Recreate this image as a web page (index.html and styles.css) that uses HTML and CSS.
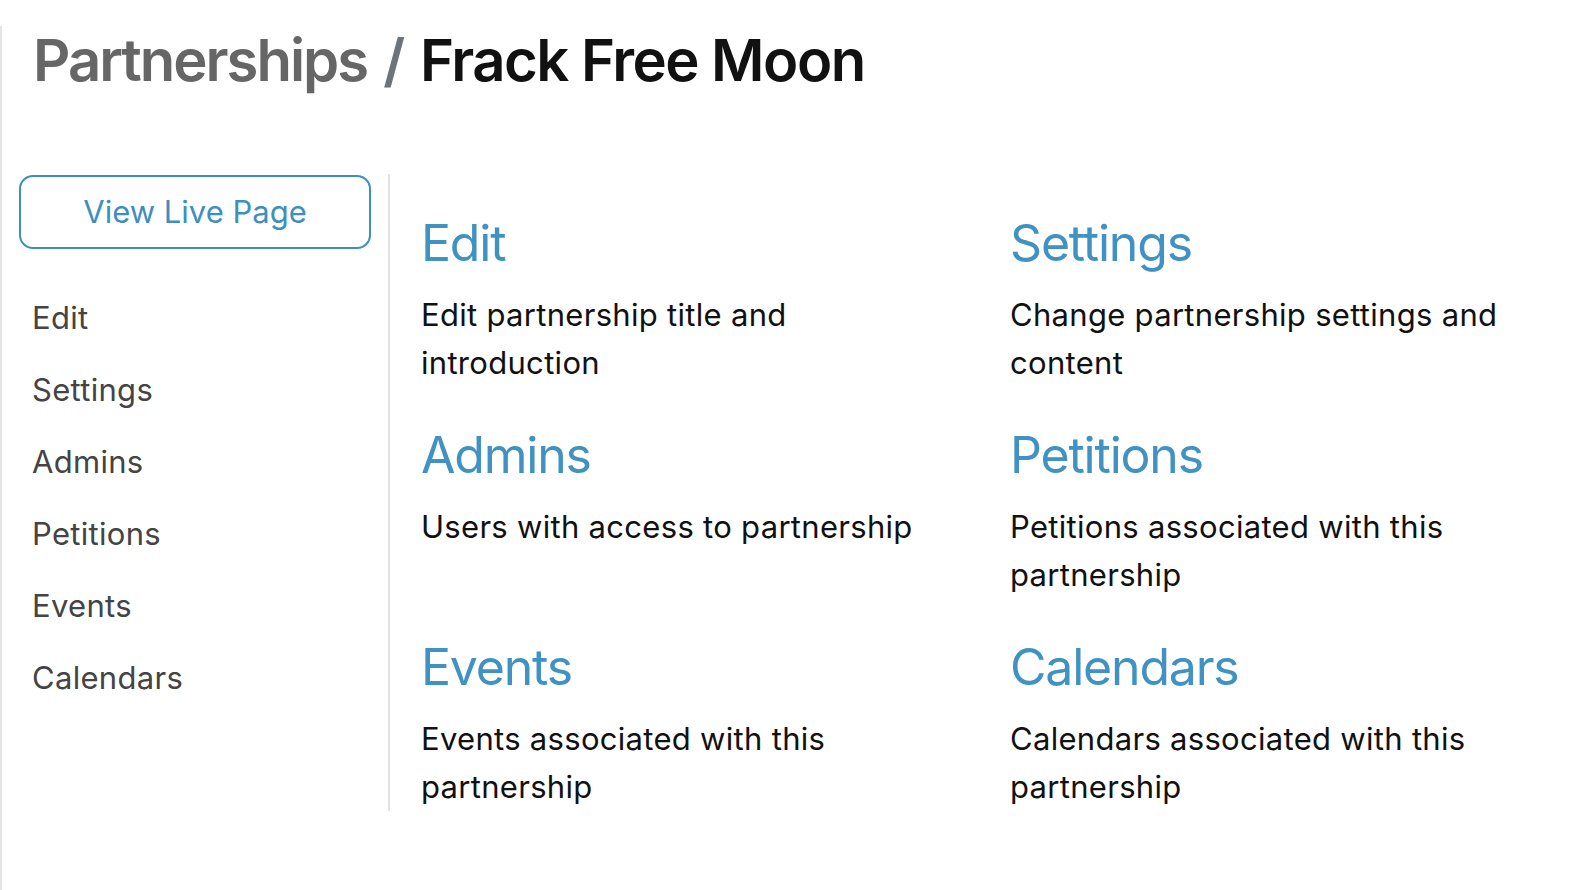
FILE: index.html
```html
<!DOCTYPE html>
<html lang="en">
<head>
    <meta charset="UTF-8">
    <meta name="viewport" content="width=device-width, initial-scale=1.0">
    <title>Partnerships / Frack Free Moon</title>
    <link rel="stylesheet" href="styles.css">
</head>
<body>
    <div class="page">
        <h1 class="titulo">
            <span class="crumb">Partnerships</span>
            <span class="sep">/</span>
            <span class="atual">Frack Free Moon</span>
        </h1>
        <div class="layout">
            <aside class="sidebar">
                <a href="#" class="ver-pagina">View Live Page</a>
                <nav class="menu">
                    <a href="#">Edit</a>
                    <a href="#">Settings</a>
                    <a href="#">Admins</a>
                    <a href="#">Petitions</a>
                    <a href="#">Events</a>
                    <a href="#">Calendars</a>
                </nav>
            </aside>
            <main class="conteudo">
                <div class="card">
                    <h2><a href="#">Edit</a></h2>
                    <p>Edit partnership title and introduction</p>
                </div>
                <div class="card">
                    <h2><a href="#">Settings</a></h2>
                    <p>Change partnership settings and content</p>
                </div>
                <div class="card">
                    <h2><a href="#">Admins</a></h2>
                    <p>Users with access to partnership</p>
                </div>
                <div class="card">
                    <h2><a href="#">Petitions</a></h2>
                    <p>Petitions associated with this partnership</p>
                </div>
                <div class="card">
                    <h2><a href="#">Events</a></h2>
                    <p>Events associated with this partnership</p>
                </div>
                <div class="card">
                    <h2><a href="#">Calendars</a></h2>
                    <p>Calendars associated with this partnership</p>
                </div>
            </main>
        </div>
    </div>
</body>
</html>
```

FILE: styles.css
```css
body {
    font-family: Inter, "Noto Sans", Arial, sans-serif;
    margin: 0;
    padding: 0;
    background-color: #ffffff;
    color: #111;
}
a {
    text-decoration: none;
}
.page {
    min-height: 890px;
    border-left: 2px solid #e4e4e4;
    box-sizing: border-box;
}
.titulo {
    margin: 26px 0 0 31px;
    font-size: 58px;
    line-height: 1.2;
    font-weight: 600;
    letter-spacing: -1.5px;
    word-spacing: 3px;
}
.crumb {
    color: #666;
    letter-spacing: -2px;
}
.sep {
    color: #6c737a;
}
.atual {
    color: #111;
    word-spacing: 0;
}
.layout {
    display: flex;
    margin-top: 78px;
}
.sidebar {
    width: 352px;
    padding: 1px 17px 0 17px;
    border-right: 2px solid #e2e2e2;
}
.ver-pagina {
    display: block;
    height: 70px;
    line-height: 70px;
    border: 2px solid #3d8fc0;
    border-radius: 14px;
    color: #3d8fc0;
    text-align: center;
    font-size: 31px;
}
.menu {
    margin-top: 33px;
    padding-left: 13px;
}
.menu a {
    display: block;
    font-size: 31px;
    line-height: 72px;
    letter-spacing: 0.3px;
    color: #444;
}
.conteudo {
    flex: 1;
    display: grid;
    grid-template-columns: 589px 1fr;
    row-gap: 38px;
    padding: 39px 20px 0 31px;
}
.card h2 {
    margin: 0 0 18px 0;
    font-size: 50px;
    line-height: 60px;
    font-weight: 400;
    letter-spacing: -1.2px;
}
.card h2 a {
    color: #3f92c1;
}
.card p {
    margin: 0;
    font-size: 31px;
    line-height: 48px;
    letter-spacing: 0.3px;
    max-width: 530px;
    color: #111;
}
```
